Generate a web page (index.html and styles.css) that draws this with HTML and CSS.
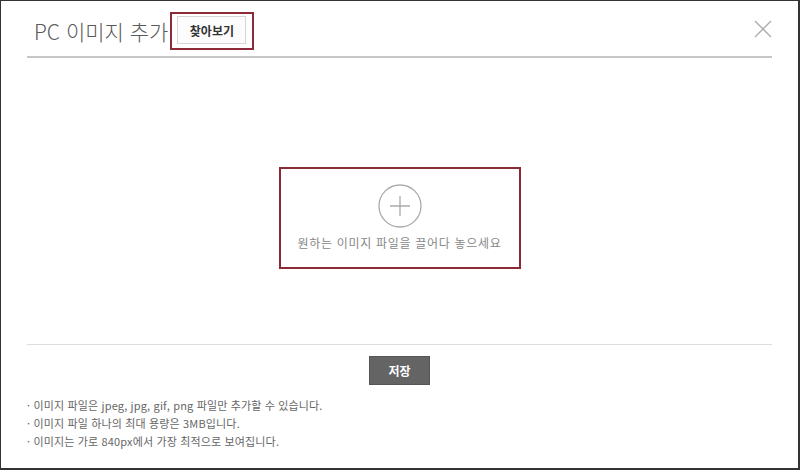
FILE: index.html
```html
<!DOCTYPE html>
<html lang="ko">
<head>
    <meta charset="UTF-8">
    <meta name="viewport" content="width=device-width, initial-scale=1.0">
    <title>PC 이미지 추가</title>
    <link rel="stylesheet" href="styles.css">
</head>
<body>
    <div class="modal">
        <div class="modal-header">
            <h2 class="modal-title">PC 이미지 추가</h2>
            <div class="browse-wrap">
                <button class="btn-browse" id="browse">찾아보기</button>
            </div>
            <button class="btn-close" id="close" aria-label="닫기">
                <svg width="18" height="18" viewBox="0 0 18 18">
                    <path d="M1 1 L17 17 M17 1 L1 17" stroke="#aaa" stroke-width="1.3" fill="none"/>
                </svg>
            </button>
        </div>

        <div class="drop-area">
            <div class="drop-zone" id="dropZone">
                <svg class="plus" width="44" height="44" viewBox="0 0 44 44">
                    <circle cx="22" cy="22" r="21" stroke="#aaa" stroke-width="1.3" fill="none"/>
                    <path d="M22 12 V32 M12 22 H32" stroke="#aaa" stroke-width="1.3" fill="none"/>
                </svg>
                <p class="drop-text">원하는 이미지 파일을 끌어다 놓으세요</p>
            </div>
        </div>

        <div class="modal-footer">
            <button class="btn-save" id="save">저장</button>
            <ul class="notes">
                <li>이미지 파일은 jpeg, jpg, gif, png 파일만 추가할 수 있습니다.</li>
                <li>이미지 파일 하나의 최대 용량은 3MB입니다.</li>
                <li>이미지는 가로 840px에서 가장 최적으로 보여집니다.</li>
            </ul>
        </div>
    </div>
</body>
</html>
```

FILE: styles.css
```css
:root{
    --point-red:#8c2a38;
    --line-gray:#c6c6c6;
    --text-gray:#666;
}
*{
    box-sizing: border-box;
}
body{
    margin: 0;
    background: #fff;
    font-family: "Noto Sans CJK KR", "Noto Sans", sans-serif;
}
.modal{
    height: 470px;
    border-top: 1px solid #333;
    border-left: 1px solid #333;
    border-right: 2px solid #333;
    border-bottom: 2px solid #333;
    padding: 0 26px;
    background: #fff;
}
.modal-header{
    display: flex;
    align-items: center;
    padding: 11px 0 6px;
    border-bottom: 2px solid var(--line-gray);
}
.modal-title{
    margin: 0 2px 0 7px;
    font-size: 21px;
    font-weight: 300;
    color: #5a5a5a;
    line-height: 38px;
}
.browse-wrap{
    border: 2px solid var(--point-red);
    padding: 2px 6px 4px 5px;
}
.btn-browse{
    display: block;
    width: 69px;
    height: 28px;
    border: 1px solid #d6d6d6;
    background: #fcfcfc;
    font-family: inherit;
    font-size: 12px;
    font-weight: 700;
    color: #333;
    padding: 0;
    cursor: pointer;
}
.btn-close{
    margin-left: auto;
    align-self: flex-start;
    margin-top: 8px;
    border: 0;
    background: none;
    padding: 0;
    width: 18px;
    height: 18px;
    cursor: pointer;
}
.btn-close svg{
    display: block;
}
.drop-area{
    height: 286px;
    padding-top: 109px;
}
.drop-zone{
    width: 242px;
    height: 102px;
    margin: 0 auto;
    border: 2px solid var(--point-red);
    display: flex;
    flex-direction: column;
    align-items: center;
    padding-top: 15px;
}
.plus{
    display: block;
}
.drop-text{
    margin: 6px 0 0;
    font-size: 12px;
    line-height: 18px;
    letter-spacing: 0.7px;
    color: #888;
}
.modal-footer{
    border-top: 1px solid #ddd;
    padding-top: 11px;
    text-align: center;
}
.btn-save{
    width: 61px;
    height: 29px;
    border: 1px solid #555;
    background: #646464;
    color: #fff;
    font-family: inherit;
    font-size: 12px;
    font-weight: 700;
    padding: 0;
    cursor: pointer;
}
.notes{
    list-style: none;
    margin: 11px 0 0;
    padding: 0;
    text-align: left;
}
.notes li{
    font-size: 11px;
    line-height: 18px;
    letter-spacing: 0.15px;
    color: var(--text-gray);
}
.notes li::before{
    content: "· ";
}
```
